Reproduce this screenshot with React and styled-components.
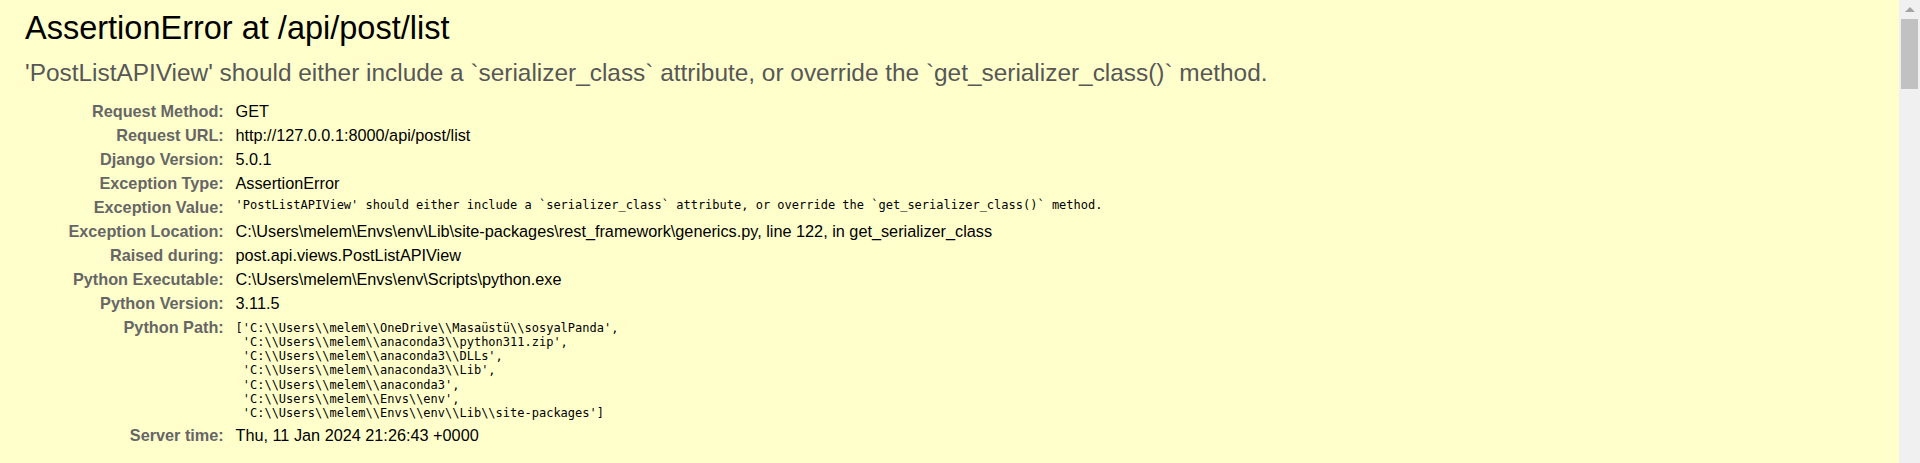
import React from 'react';
import styled, { createGlobalStyle } from 'styled-components';

const GlobalStyle = createGlobalStyle`
  html, body {
    margin: 0;
    padding: 0;
  }
  body {
    font-family: "Liberation Sans", Arial, sans-serif;
    font-size: 16.25px;
    background: #ffc;
    overflow: hidden;
  }
`;

const Page = styled.div`
  display: flex;
  height: 463px;
`;

const Summary = styled.div`
  flex: 1;
  background: #ffc;
  color: #000;
  padding: 10px 25px;
`;

const Title = styled.h1`
  margin: 0;
  font-size: 32.5px;
  font-weight: normal;
  line-height: 37px;
`;

const ExceptionValue = styled.pre`
  margin: 12px 0 12px 0;
  font-family: "Liberation Sans", Arial, sans-serif;
  font-size: 24.4px;
  line-height: 28px;
  color: #575757;
  white-space: pre-wrap;
`;

const MetaTable = styled.table`
  border: none;
  border-collapse: collapse;
  background: transparent;
`;

const Label = styled.th`
  width: 195px;
  padding: 2.5px 8px 2.5px 3.75px;
  text-align: right;
  vertical-align: top;
  color: #666;
  font-weight: bold;
  line-height: 19px;
  white-space: nowrap;
`;

const Value = styled.td`
  padding: 2.5px 3.75px;
  vertical-align: top;
  line-height: 19px;
`;

const Code = styled.pre`
  margin: 0;
  padding-top: ${(p) => (p.$list ? '3px' : '0')};
  font-family: "DejaVu Sans Mono", "Liberation Mono", monospace;
  font-size: 12px;
  line-height: ${(p) => (p.$list ? '14.3px' : '14px')};
  white-space: pre-wrap;
`;

const Scrollbar = styled.div`
  width: 21px;
  flex-shrink: 0;
  background: #f0f0f0;
  display: flex;
  flex-direction: column;
  align-items: center;
`;

const ArrowUp = styled.div`
  margin-top: 7px;
  width: 0;
  height: 0;
  border-left: 5px solid transparent;
  border-right: 5px solid transparent;
  border-bottom: 5px solid #a3a3a3;
`;

const Thumb = styled.div`
  margin-top: 7px;
  width: 17px;
  height: 70px;
  background: #c1c1c1;
`;

const message =
  "'PostListAPIView' should either include a `serializer_class` attribute, or override the `get_serializer_class()` method.";

const pythonPath = [
  String.raw`['C:\\Users\\melem\\OneDrive\\Masaüstü\\sosyalPanda',`,
  String.raw` 'C:\\Users\\melem\\anaconda3\\python311.zip',`,
  String.raw` 'C:\\Users\\melem\\anaconda3\\DLLs',`,
  String.raw` 'C:\\Users\\melem\\anaconda3\\Lib',`,
  String.raw` 'C:\\Users\\melem\\anaconda3',`,
  String.raw` 'C:\\Users\\melem\\Envs\\env',`,
  String.raw` 'C:\\Users\\melem\\Envs\\env\\Lib\\site-packages']`,
].join('\n');

const rows = [
  ['Request Method:', 'GET'],
  ['Request URL:', 'http://127.0.0.1:8000/api/post/list'],
  ['Django Version:', '5.0.1'],
  ['Exception Type:', 'AssertionError'],
  ['Exception Value:', <Code>{message}</Code>],
  ['Exception Location:', String.raw`C:\Users\melem\Envs\env\Lib\site-packages\rest_framework\generics.py, line 122, in get_serializer_class`],
  ['Raised during:', 'post.api.views.PostListAPIView'],
  ['Python Executable:', String.raw`C:\Users\melem\Envs\env\Scripts\python.exe`],
  ['Python Version:', '3.11.5'],
  ['Python Path:', <Code $list>{pythonPath}</Code>],
  ['Server time:', 'Thu, 11 Jan 2024 21:26:43 +0000'],
];

const App = () => {
  return (
    <>
      <GlobalStyle />
      <Page>
        <Summary>
          <Title>AssertionError at /api/post/list</Title>
          <ExceptionValue>{message}</ExceptionValue>
          <MetaTable>
            <tbody>
              {rows.map(([label, value]) => (
                <tr key={label}>
                  <Label scope="row">{label}</Label>
                  <Value>{value}</Value>
                </tr>
              ))}
            </tbody>
          </MetaTable>
        </Summary>
        <Scrollbar>
          <ArrowUp />
          <Thumb />
        </Scrollbar>
      </Page>
    </>
  );
};

export default App;
